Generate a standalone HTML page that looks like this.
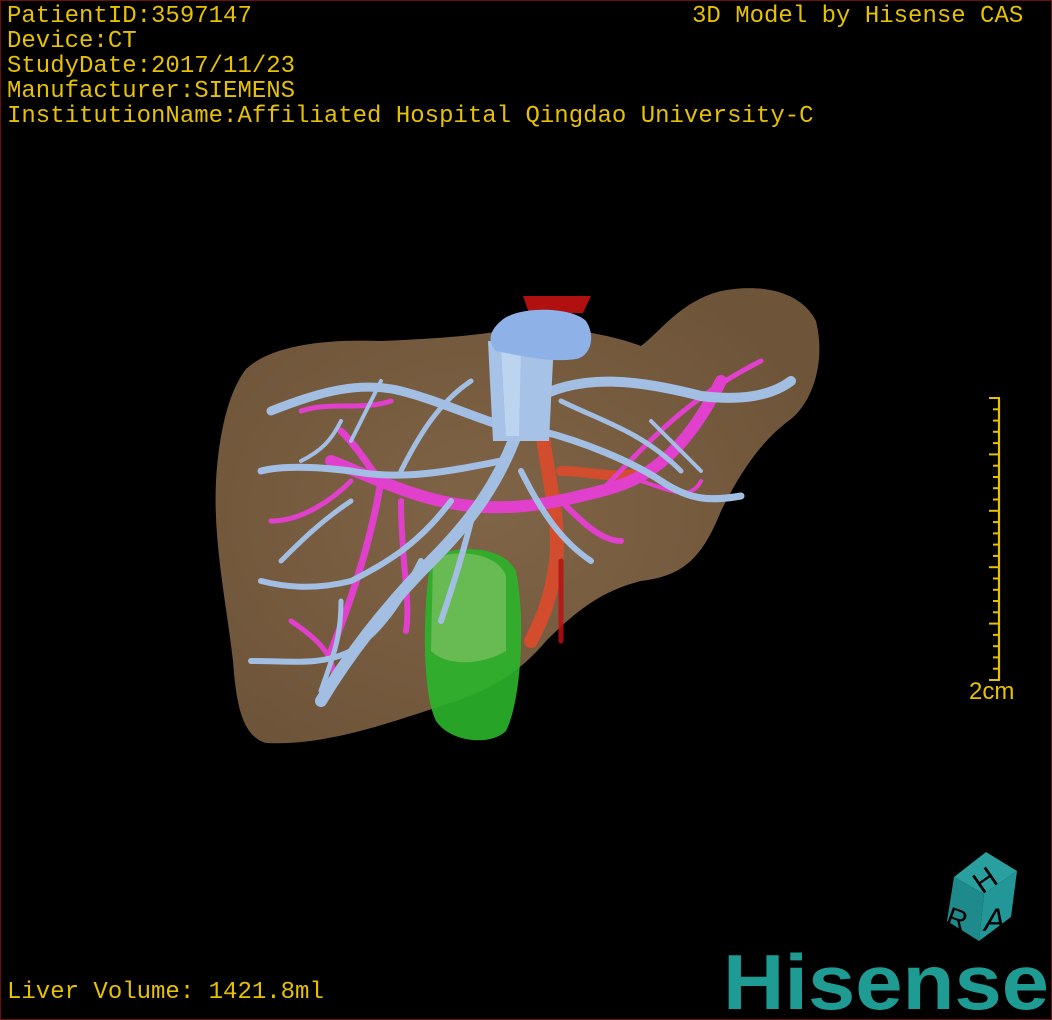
<!DOCTYPE html>
<html><head><meta charset="utf-8"><style>
html,body{margin:0;padding:0;background:#000}
#w{position:relative;width:1050px;height:1018px;border:1px solid #6a1010;overflow:hidden;background:#000}
.t{position:absolute;left:6px;color:#e6c100;font-family:"Liberation Mono",monospace;font-size:24px;line-height:25px;white-space:pre}
svg{position:absolute;left:0;top:0}
</style></head><body><div id="w">
<svg width="1052" height="1020" viewBox="0 0 1052 1020">
<defs><radialGradient id="lg" cx="0.45" cy="0.5" r="0.6"><stop offset="0" stop-color="#806448"/><stop offset="1" stop-color="#6e5438"/></radialGradient></defs>
<path d="M245,368 C270,345 320,338 380,340 C430,338 470,335 500,330 C540,322 600,330 640,345 C660,330 680,300 720,290 C760,282 800,290 815,320 C825,360 812,400 790,418 C760,440 740,470 720,510 C700,560 680,575 640,580 C600,590 575,610 545,640 C520,670 490,690 440,705 C380,725 320,745 265,742 C240,735 235,700 232,660 C225,600 212,540 215,480 C218,430 228,390 245,368 Z" fill="url(#lg)"/>
<path d="M430,560 C440,545 500,540 515,570 C525,620 520,700 505,730 C490,745 450,742 435,720 C420,690 422,600 430,560 Z" fill="#2bb52b" opacity="0.9"/>
<path d="M432,560 C445,548 495,548 505,575 L505,650 C480,665 445,665 430,650 Z" fill="#8cc36a" opacity="0.6"/>
<g fill="none" stroke="#e24a2a" stroke-linecap="round" opacity="0.85">
<path d="M540,420 C545,470 560,520 555,560 C550,600 540,620 530,640" stroke-width="14"/>
<path d="M560,640 L560,560" stroke="#c01010" stroke-width="5"/>
<path d="M560,470 C590,470 620,480 640,470" stroke-width="10"/>
</g>
<g fill="none" stroke="#e040cc" stroke-linecap="round" stroke-linejoin="round">
<path d="M330,460 C380,480 420,500 470,505 C520,510 560,500 600,490 C640,480 680,460 720,380" stroke-width="12"/>
<path d="M380,480 C370,540 350,600 330,650" stroke-width="7"/>
<path d="M400,500 C400,560 410,600 405,630" stroke-width="6"/>
<path d="M340,430 C360,450 370,470 380,480" stroke-width="7"/>
<path d="M300,410 C330,400 360,410 390,400" stroke-width="5"/>
<path d="M290,620 C320,640 340,660 330,690" stroke-width="5"/>
<path d="M600,490 C640,450 680,400 760,360" stroke-width="5"/>
<path d="M560,500 C580,520 600,540 620,540" stroke-width="6"/>
<path d="M270,520 C300,520 330,500 350,480" stroke-width="5"/>
<path d="M640,480 C670,490 690,500 700,480" stroke-width="4"/>
</g>
<g fill="none" stroke="#a2bee2" stroke-linecap="round" stroke-linejoin="round">
<path d="M520,420 C500,480 470,520 430,560 C390,600 350,650 320,700" stroke-width="12"/>
<path d="M520,430 C480,420 440,400 400,390 C360,380 320,390 270,410" stroke-width="9"/>
<path d="M530,400 C580,370 640,380 700,395 C740,400 770,395 790,380" stroke-width="10"/>
<path d="M540,430 C580,440 630,460 660,480 C690,500 710,500 740,495" stroke-width="7"/>
<path d="M500,460 C450,470 400,480 350,470 C310,465 280,465 260,470" stroke-width="7"/>
<path d="M450,500 C420,540 390,560 350,580 C310,590 280,585 260,580" stroke-width="6"/>
<path d="M420,560 C400,600 380,630 350,650 C320,665 290,660 250,660" stroke-width="6"/>
<path d="M470,520 C460,560 450,590 440,620" stroke-width="6"/>
<path d="M520,470 C540,510 560,540 590,560" stroke-width="6"/>
<path d="M560,400 C600,420 640,430 680,470" stroke-width="5"/>
<path d="M470,380 C440,400 420,430 400,470" stroke-width="5"/>
<path d="M350,500 C320,520 300,540 280,560" stroke-width="5"/>
<path d="M340,420 C330,440 320,450 300,460" stroke-width="4"/>
<path d="M650,420 C670,440 690,460 700,470" stroke-width="4"/>
<path d="M380,380 C370,400 360,420 350,440" stroke-width="4"/>
<path d="M340,600 C340,640 330,660 320,690" stroke-width="5"/>
</g>
<path d="M487,340 L553,340 L548,440 L492,440 Z" fill="#a6c2e6"/>
<path d="M500,345 L520,345 L518,435 L505,435 Z" fill="#c8dcf4" opacity="0.7"/>
<path d="M522,295 L590,295 L582,312 L528,312 Z" fill="#b01010"/>
<path d="M500,320 C515,305 570,305 585,320 C595,335 590,355 575,358 C550,362 520,355 495,350 C485,340 490,328 500,320 Z" fill="#8eb2e8"/>
<g stroke="#e6c100" stroke-width="2.2">
<line x1="998" y1="397" x2="998" y2="679"/>
</g>
<g stroke="#e6c100" stroke-width="2" id="ticks"></g>
<polygon points="953,876 985,851 1016,870 983,893" fill="#2a9f9f"/>
<polygon points="953,876 983,893 978,940 946,920" fill="#1f8a8c"/>
<polygon points="983,893 1016,870 1010,916 978,940" fill="#239698"/>
<text x="971" y="888" font-family="Liberation Sans,sans-serif" font-size="30" fill="#000" transform="rotate(-35 985 875)">H</text>
<text x="947" y="928" font-family="Liberation Sans,sans-serif" font-size="28" fill="#000" transform="rotate(20 958 915)">R</text>
<text x="983" y="930" font-family="Liberation Sans,sans-serif" font-size="32" font-style="italic" fill="#000">A</text>
<text x="722" y="1008" font-family="Liberation Sans,sans-serif" font-size="78" font-weight="bold" fill="#1e9c94" textLength="326" lengthAdjust="spacingAndGlyphs">Hisense</text>
</svg>
<div class="t" style="top:3px">PatientID:3597147
Device:CT
StudyDate:2017/11/23
Manufacturer:SIEMENS
InstitutionName:Affiliated Hospital Qingdao University-C</div>
<div class="t" style="top:3px;left:691px">3D Model by Hisense CAS</div>
<div class="t" style="top:979px">Liver Volume: 1421.8ml</div>
<div class="t" style="top:678px;left:968px;font-family:'Liberation Sans',sans-serif;font-size:24px">2cm</div>
<script>
var g=document.getElementById('ticks'),s='';
for(var i=0;i<=25;i++){var y=397+i*11.28;var x1=(i%5==0)?988:992;s+='<line x1="'+x1+'" y1="'+y.toFixed(1)+'" x2="999" y2="'+y.toFixed(1)+'"/>';}
g.innerHTML=s;
</script>
</div></body></html>
